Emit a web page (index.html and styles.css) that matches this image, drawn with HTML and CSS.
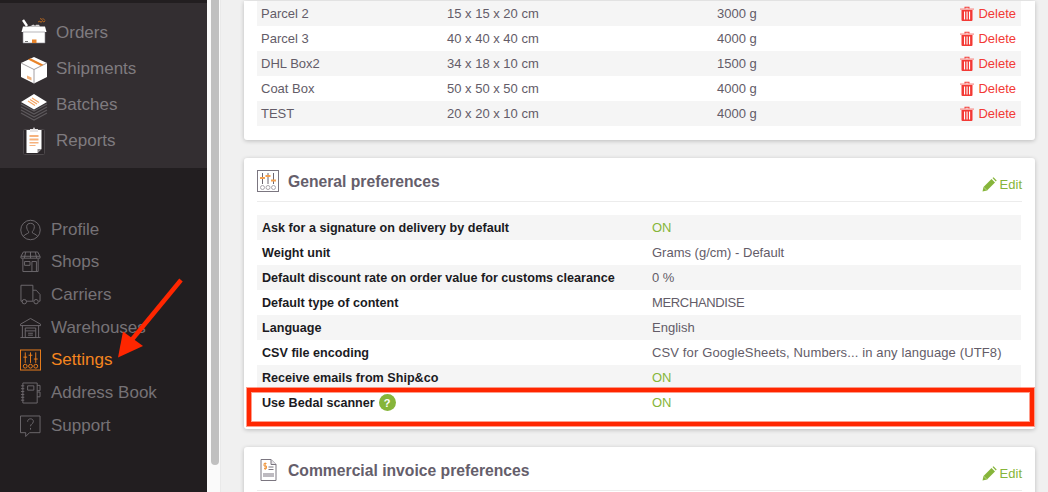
FILE: index.html
```html
<!DOCTYPE html>
<html lang="en">
<head>
<meta charset="utf-8">
<title>Settings</title>
<link rel="stylesheet" href="styles.css">
</head>
<body>
<svg class="defs" width="0" height="0" aria-hidden="true">
  <defs>
    <symbol id="trash" viewBox="0 0 14 15">
      <path d="M0 2.500h14v1.200H0z" fill="#f98a86"/>
      <path d="M4.500 2.500V.8h5v1.700h-1V1.700h-3v.8z" fill="#f33a35"/>
      <path d="M1.500 4h11v10a1 1 0 0 1-1 1h-9a1 1 0 0 1-1-1z" fill="#f33a35"/>
      <path d="M4 5.500h1.100v8H4zM6.500 5.500h1.100v8H6.500zM9 5.500h1.100v8H9z" fill="#fff"/>
    </symbol>
    <symbol id="pencil" viewBox="0 0 15 15">
      <path d="M0.500 14.500l1-4.500 8-8 3.500 3.500-8 8z" fill="#86b53a"/>
      <path d="M10.500 1l1-.8 3.200 3.200-.9 1z" fill="#86b53a"/>
      <path d="M1.500 10l3.500 3.500" stroke="#c3da9c" stroke-width=".8"/>
    </symbol>
  </defs>
</svg>
<div class="app">
  <aside class="sidebar">
    <nav class="nav-main">
      <a class="nav-item">
        <svg class="nav-icon" viewBox="0 1 30 30">
          <path d="M4 3l4 6" stroke="#fff" stroke-width="2.400"/>
          <path d="M9 9.500h12l-1-1.800h-3l-.8 1-2-1.300-2 1.300z" fill="#d8d6d7"/>
          <path d="M19 5l2-1 1 1.500 1.500-2 1 1.500 1.500-1" stroke="#b4651e" stroke-width="1" fill="none"/>
          <path d="M21 1.500l2 1 1-1 2 2" stroke="#b4651e" stroke-width="1" fill="none"/>
          <path d="M4 9.500h22l1.500 5.500H2.500z" fill="#fff"/>
          <path d="M4 15h22v11H4z" fill="#fff" stroke="#88848a" stroke-width=".6"/>
          <path d="M13 22.500h4.500V26H13z" fill="#e8842a"/>
          <path d="M6 24h3v1H6z" fill="#777"/>
        </svg>
        <span>Orders</span>
      </a>
      <a class="nav-item">
        <svg class="nav-icon" viewBox="0 -1 30 30">
          <path d="M15 2l13 6v14l-13 6.500L2 22V8z" fill="#fff"/>
          <path d="M2 8l13 6.500L28 8" fill="none" stroke="#8a868a" stroke-width=".8"/>
          <path d="M15 14.500v14" stroke="#8a868a" stroke-width=".8"/>
          <path d="M9 4.500l13 6.500 2.500-1.200L11.500 3.300z" fill="#e8842a"/>
          <path d="M8 20.500l4.500 2v3L8 23.500z" fill="#f4b27a"/>
        </svg>
        <span>Shipments</span>
      </a>
      <a class="nav-item">
        <svg class="nav-icon" viewBox="0 -2 30 30">
          <path d="M2 12l13 7 13-7M2 15l13 7 13-7M2 18l13 7 13-7M2 21l13 7 13-7" fill="none" stroke="#5d595c" stroke-width="1.200"/>
          <path d="M15 2l13 8-13 7.500L2 10z" fill="#fff"/>
          <path d="M9 9l7 4.500M11 7.500l7 4.500M13 6l7 4.500" stroke="#f4a463" stroke-width="1.200"/>
        </svg>
        <span>Batches</span>
      </a>
      <a class="nav-item">
        <svg class="nav-icon" viewBox="0 0 30 30">
          <rect x="4.500" y="3.500" width="21" height="25" rx="1" fill="#2b2629" stroke="#4d484b"/>
          <path d="M7.500 4h15v19l-4 4h-11z" fill="#fff"/>
          <path d="M11 3h3l1-2 1 2h3v3h-8z" fill="#e6e4e5"/>
          <path d="M10.500 9h9v2h-9zM10.500 12.500h9v2h-9zM10.500 16h9v1.500h-9zM10.500 19h6v1h-6z" fill="#f6b27d"/>
          <path d="M18.500 23h4l-4 4z" fill="#8d898c"/>
        </svg>
        <span>Reports</span>
      </a>
    </nav>
    <nav class="nav-sub">
      <a class="nav-link">
        <svg class="sub-icon" viewBox="0 0 22 22">
          <circle cx="11" cy="11" r="10.200"/>
          <path d="M3.500 18c1-2.500 4.500-3 5.500-4v-1.500c-1.200-1-2-3-2-5 0-2.500 1.800-3.500 4-3.500s4 1 4 3.500c0 2-.8 4-2 5V14c1 1 4.500 1.500 5.500 4"/>
        </svg>
        <span>Profile</span>
      </a>
      <a class="nav-link">
        <svg class="sub-icon" viewBox="0 0 22 22">
          <path d="M3.500.5h15L21 5v2H1V5zM1 5h20M6 .5L4.500 7M11 .5V7M16 .5L17.500 7"/>
          <path d="M3 7.500v13.500h16V7.500M4.800 10.500h5.700v4H4.800zM12.500 10.500h4.700V21M12.500 10.500V21"/>
        </svg>
        <span>Shops</span>
      </a>
      <a class="nav-link">
        <svg class="sub-icon" viewBox="0 0 22 22">
          <path d="M2.500 17.500H1V.8h12.500v16.700H6.500M13.500 6H17l4 4.500v7h-1.500M13.500 17.500H14"/>
          <circle cx="4.500" cy="18" r="2.300"/>
          <circle cx="16.800" cy="18" r="2.300"/>
        </svg>
        <span>Carriers</span>
      </a>
      <a class="nav-link">
        <svg class="sub-icon" viewBox="0 0 22 22">
          <path d="M.5 7L11 1l10.500 6v1.500H.5zM2.500 8.500V21M19.500 8.500V21M.5 21h21M5.500 11h11v10h-11zM5.500 14h11M8.500 16.500h5M8.500 18.500h5"/>
        </svg>
        <span>Warehouses</span>
      </a>
      <a class="nav-link is-active">
        <svg class="sub-icon" viewBox="0 0 22 22">
          <rect x=".5" y=".5" width="21" height="21"/>
          <path d="M5.500 3v11M11 3v11M16.500 3v11M3.500 8h4M9 6h4M14.500 10h4"/>
          <circle cx="5.500" cy="17.500" r="2"/>
          <circle cx="11" cy="17.500" r="2"/>
          <circle cx="16.500" cy="17.500" r="2"/>
        </svg>
        <span>Settings</span>
      </a>
      <a class="nav-link">
        <svg class="sub-icon" viewBox="0 0 22 22">
          <path d="M3 .5h15v21H3zM18 3h3v5.500h-3M18 10h3v5h-3M1 3.500h3.500M1 6.500h3.500M1 9.500h3.500M1 12.500h3.500M1 15.500h3.500M1 18.500h3.500M8 3.500h6.500v4.500H8z"/>
        </svg>
        <span>Address Book</span>
      </a>
      <a class="nav-link">
        <svg class="sub-icon" viewBox="0 0 22 22">
          <path d="M.5.5h20.500v17.500H10l-4 4v-4H.5z"/>
          <path d="M8 6.500c0-2 1.300-3 3-3s3 1 3 2.800c0 2.400-3 2.400-3 5M11 13v1.800"/>
        </svg>
        <span>Support</span>
      </a>
    </nav>
  </aside>
  <div class="gutter"><div class="thumb"></div></div>
  <main class="main">
    <section class="card card-first">
      <div class="rows">
        <div class="row row-parcel"><span>Parcel 2</span><span>15 x 15 x 20 cm</span><span>3000 g</span><a class="del"><svg class="trash"><use href="#trash"/></svg>Delete</a></div>
        <div class="row row-parcel"><span>Parcel 3</span><span>40 x 40 x 40 cm</span><span>4000 g</span><a class="del"><svg class="trash"><use href="#trash"/></svg>Delete</a></div>
        <div class="row row-parcel"><span>DHL Box2</span><span>34 x 18 x 10 cm</span><span>1500 g</span><a class="del"><svg class="trash"><use href="#trash"/></svg>Delete</a></div>
        <div class="row row-parcel"><span>Coat Box</span><span>50 x 50 x 50 cm</span><span>4000 g</span><a class="del"><svg class="trash"><use href="#trash"/></svg>Delete</a></div>
        <div class="row row-parcel"><span>TEST</span><span>20 x 20 x 10 cm</span><span>4000 g</span><a class="del"><svg class="trash"><use href="#trash"/></svg>Delete</a></div>
      </div>
    </section>
    <section class="card">
      <header class="card-head">
        <svg class="head-icon" viewBox="0 0 22 22">
          <rect x=".5" y=".5" width="21" height="21" fill="#fff" stroke="#7b7680"/>
          <path d="M5.500 3v11M11 3v11M16.500 3v11" stroke="#6c6670" fill="none"/>
          <path d="M3 7h5v2H3zM8.500 5h5v2h-5zM14 9.500h5v2h-5z" fill="#f4a04f"/>
          <circle cx="5.500" cy="17.500" r="2" fill="none" stroke="#aaa6ad"/>
          <circle cx="11" cy="17.500" r="2" fill="none" stroke="#aaa6ad"/>
          <circle cx="16.500" cy="17.500" r="2" fill="none" stroke="#aaa6ad"/>
        </svg>
        <h2 class="card-title">General preferences</h2>
        <a class="edit"><svg class="pencil"><use href="#pencil"/></svg>Edit</a>
      </header>
      <div class="rows">
        <div class="row row-pref"><b>Ask for a signature on delivery by default</b><span class="on">ON</span></div>
        <div class="row row-pref"><b>Weight unit</b><span>Grams (g/cm) - Default</span></div>
        <div class="row row-pref"><b>Default discount rate on order value for customs clearance</b><span>0 %</span></div>
        <div class="row row-pref"><b>Default type of content</b><span class="tight">MERCHANDISE</span></div>
        <div class="row row-pref"><b>Language</b><span>English</span></div>
        <div class="row row-pref"><b>CSV file encoding</b><span class="wide">CSV for GoogleSheets, Numbers... in any language (UTF8)</span></div>
        <div class="row row-pref"><b>Receive emails from Ship&amp;co</b><span class="on">ON</span></div>
        <div class="row row-pref"><b class="with-help">Use Bedal scanner <i class="help">?</i></b><span class="on">ON</span></div>
      </div>
    </section>
    <section class="card">
      <header class="card-head">
        <svg class="head-icon" viewBox="0 0 22 22">
          <path d="M4 .5h10l5 5v16H4z" fill="#fff" stroke="#7b7680"/>
          <path d="M14 .5v5h5" fill="#e6e4e8" stroke="#7b7680"/>
          <path d="M9.500 4.500H7v2.500h2.500v2.500H7M8.200 3.500v7.500" fill="none" stroke="#f09a45"/>
          <path d="M11.500 8h5M11.500 10.500h5" stroke="#7b7680" fill="none"/>
          <path d="M6 14h11v4H6z" fill="#bdbac0"/>
        </svg>
        <h2 class="card-title">Commercial invoice preferences</h2>
        <a class="edit"><svg class="pencil"><use href="#pencil"/></svg>Edit</a>
      </header>
    </section>
  </main>
</div>
<div class="callout-box"></div>
<svg class="callout-arrow" viewBox="0 0 1048 492" aria-hidden="true">
  <path d="M181 280L130 342" stroke="#ff2600" stroke-width="4.500" fill="none"/>
  <path d="M118 357.500l5-26 20 14.500z" fill="#ff2600"/>
</svg>
</body>
</html>
```
FILE: styles.css
```css
* { box-sizing: border-box; }
html, body { margin: 0; height: 100%; }
body {
  height: 492px;
  overflow: hidden;
  position: relative;
  font-family: "Liberation Sans", Arial, sans-serif;
  font-size: 13px;
  color: #635c68;
  background: #f0f0f0;
}
.defs { position: absolute; }
.app { display: flex; height: 492px; overflow: hidden; }

.sidebar { width: 207px; flex: none; background: #221e20; padding-top: 3px; }
.nav-main { background: #332e31; padding: 12px 0 9px 19px; height: 165px; }
.nav-item { display: flex; align-items: center; height: 36px; gap: 7px; font-size: 17px; color: #7f7b7f; }
.nav-icon { width: 30px; height: 30px; flex: none; overflow: visible; }
.nav-sub { padding: 45.4px 0 0 20px; display: flex; flex-direction: column; }
.nav-link { display: flex; align-items: center; height: 32.67px; gap: 10px; font-size: 17px; color: #767276; white-space: nowrap; }
.sub-icon { width: 21px; height: 22px; flex: none; fill: none; stroke: #6e6a6e; stroke-width: 1; }
.nav-link.is-active { color: #f5851f; }
.nav-link.is-active .sub-icon { stroke: #ee7f1c; }

.gutter { width: 14px; flex: none; background: #fafafa; border-right: 1px solid #e9e9e9; padding-left: 4px; }
.thumb { width: 8px; height: 465px; background: #c0c0c0; border-radius: 0 0 4px 4px; }

.main { flex: 1; min-width: 0; padding: 1px 13px 0 23px; display: flex; flex-direction: column; gap: 18px; }
.card { background: #fff; border-radius: 3px; box-shadow: 0 1px 4px rgba(0, 0, 0, .22); padding: 0 14px 14px 13px; flex: none; }
.card-first { border-radius: 0 0 3px 3px; }
.card-head { height: 44px; display: flex; align-items: center; gap: 9px; border-bottom: 1px solid #ececec; margin-right: -1px; margin-bottom: 13px; }
.head-icon { width: 22px; height: 22px; flex: none; margin-top: 3px; }
.card-title { margin: 4px 0 0; font-size: 15.7px; font-weight: 700; color: #655e6b; flex: 1; }
.edit { display: flex; align-items: center; gap: 3px; color: #86b53a; margin-top: 10px; }
.pencil { width: 15px; height: 15px; }

.row { height: 25px; display: grid; align-items: center; padding: 0 5px 0 4px; white-space: nowrap; }
.row:nth-child(odd) { background: #f5f5f5; }
.row-parcel { grid-template-columns: 186px 270px 1fr auto; }
.row-pref { grid-template-columns: 390px 1fr; padding-left: 5px; }
.row-pref b { color: #1b1b1f; font-weight: 700; font-size: 12.6px; }
.on { color: #86b53a; }
.wide { letter-spacing: .13px; }
.tight { letter-spacing: -.35px; }
.del { display: flex; align-items: center; gap: 4px; color: #f33a35; }
.trash { width: 14px; height: 15px; }
.with-help { display: flex; align-items: center; gap: 4px; }
.help { width: 17px; height: 17px; border-radius: 50%; background: #86b53a; color: #fff; font: 700 11px "Liberation Sans", Arial, sans-serif; display: flex; align-items: center; justify-content: center; }

.callout-box {
  position: absolute;
  left: 247px; top: 388px;
  width: 787px; height: 38px;
  border: 4px solid #ff2600;
  box-shadow: 0 0 0 1px rgba(255, 38, 0, .45), inset 0 0 0 1px rgba(255, 38, 0, .45);
}
.callout-arrow { position: absolute; left: 0; top: 0; width: 1048px; height: 492px; pointer-events: none; }
```
